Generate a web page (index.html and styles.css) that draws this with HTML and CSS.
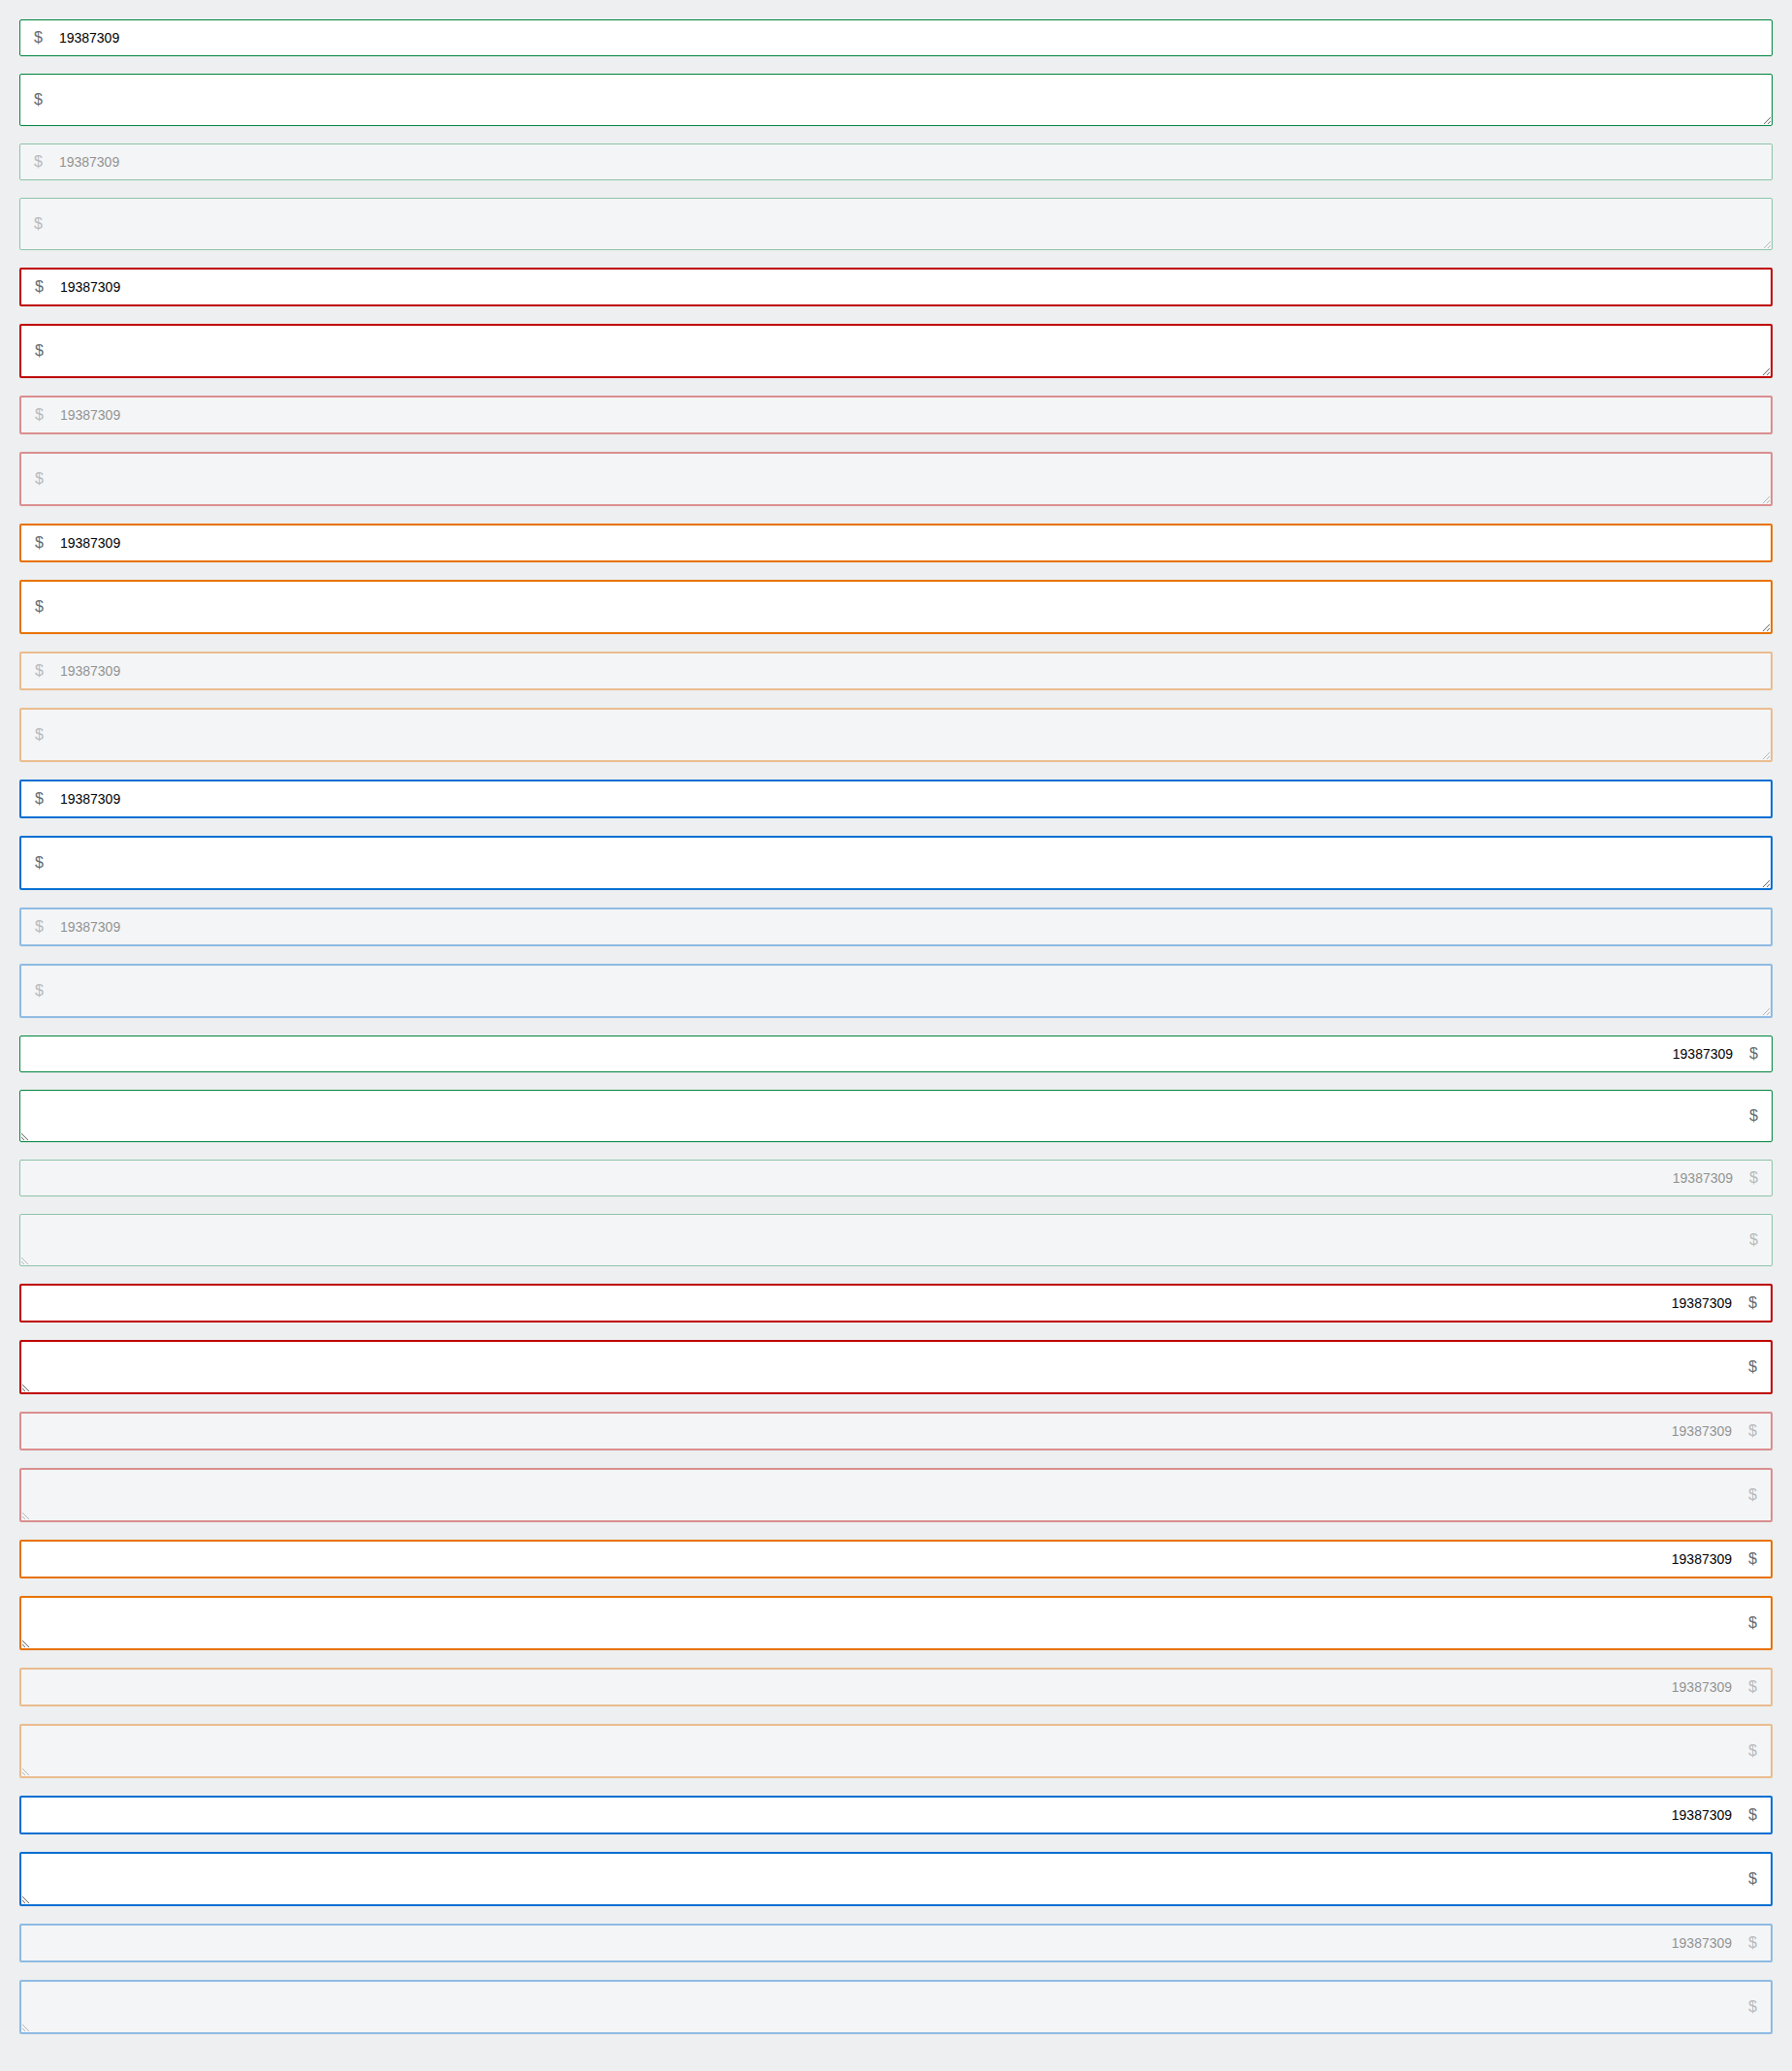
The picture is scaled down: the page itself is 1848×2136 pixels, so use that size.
FILE: index.html
```
<!DOCTYPE html>
<html lang="en">
<head>
<meta charset="utf-8">
<title>Adorned inputs</title>
<link rel="stylesheet" href="styles.css">
</head>
<body>
<main class="stack">
  <section class="stack" dir="ltr">
    <div class="field"><label class="adornment" for="l1">$</label><input class="control" id="l1" type="text" value="19387309"></div>
    <div class="field"><label class="adornment" for="l2">$</label><textarea class="control multiline" id="l2"></textarea></div>
    <div class="field disabled"><label class="adornment" for="l3">$</label><input class="control" id="l3" type="text" value="19387309" disabled></div>
    <div class="field disabled"><label class="adornment" for="l4">$</label><textarea class="control multiline" id="l4" disabled></textarea></div>
    <div class="field error"><label class="adornment" for="l5">$</label><input class="control" id="l5" type="text" value="19387309"></div>
    <div class="field error"><label class="adornment" for="l6">$</label><textarea class="control multiline" id="l6"></textarea></div>
    <div class="field error disabled"><label class="adornment" for="l7">$</label><input class="control" id="l7" type="text" value="19387309" disabled></div>
    <div class="field error disabled"><label class="adornment" for="l8">$</label><textarea class="control multiline" id="l8" disabled></textarea></div>
    <div class="field warning"><label class="adornment" for="l9">$</label><input class="control" id="l9" type="text" value="19387309"></div>
    <div class="field warning"><label class="adornment" for="l10">$</label><textarea class="control multiline" id="l10"></textarea></div>
    <div class="field warning disabled"><label class="adornment" for="l11">$</label><input class="control" id="l11" type="text" value="19387309" disabled></div>
    <div class="field warning disabled"><label class="adornment" for="l12">$</label><textarea class="control multiline" id="l12" disabled></textarea></div>
    <div class="field info"><label class="adornment" for="l13">$</label><input class="control" id="l13" type="text" value="19387309"></div>
    <div class="field info"><label class="adornment" for="l14">$</label><textarea class="control multiline" id="l14"></textarea></div>
    <div class="field info disabled"><label class="adornment" for="l15">$</label><input class="control" id="l15" type="text" value="19387309" disabled></div>
    <div class="field info disabled"><label class="adornment" for="l16">$</label><textarea class="control multiline" id="l16" disabled></textarea></div>
  </section>
  <section class="stack" dir="rtl">
    <div class="field"><label class="adornment" for="r1">$</label><input class="control" id="r1" type="text" value="19387309"></div>
    <div class="field"><label class="adornment" for="r2">$</label><textarea class="control multiline" id="r2"></textarea></div>
    <div class="field disabled"><label class="adornment" for="r3">$</label><input class="control" id="r3" type="text" value="19387309" disabled></div>
    <div class="field disabled"><label class="adornment" for="r4">$</label><textarea class="control multiline" id="r4" disabled></textarea></div>
    <div class="field error"><label class="adornment" for="r5">$</label><input class="control" id="r5" type="text" value="19387309"></div>
    <div class="field error"><label class="adornment" for="r6">$</label><textarea class="control multiline" id="r6"></textarea></div>
    <div class="field error disabled"><label class="adornment" for="r7">$</label><input class="control" id="r7" type="text" value="19387309" disabled></div>
    <div class="field error disabled"><label class="adornment" for="r8">$</label><textarea class="control multiline" id="r8" disabled></textarea></div>
    <div class="field warning"><label class="adornment" for="r9">$</label><input class="control" id="r9" type="text" value="19387309"></div>
    <div class="field warning"><label class="adornment" for="r10">$</label><textarea class="control multiline" id="r10"></textarea></div>
    <div class="field warning disabled"><label class="adornment" for="r11">$</label><input class="control" id="r11" type="text" value="19387309" disabled></div>
    <div class="field warning disabled"><label class="adornment" for="r12">$</label><textarea class="control multiline" id="r12" disabled></textarea></div>
    <div class="field info"><label class="adornment" for="r13">$</label><input class="control" id="r13" type="text" value="19387309"></div>
    <div class="field info"><label class="adornment" for="r14">$</label><textarea class="control multiline" id="r14"></textarea></div>
    <div class="field info disabled"><label class="adornment" for="r15">$</label><input class="control" id="r15" type="text" value="19387309" disabled></div>
    <div class="field info disabled"><label class="adornment" for="r16">$</label><textarea class="control multiline" id="r16" disabled></textarea></div>
  </section>
</main>
</body>
</html>
```
FILE: styles.css
```
* {
  box-sizing: border-box;
}

body {
  margin: 0;
  padding: 20px;
  background: #edeff0;
  font-family: "Liberation Sans", Arial, sans-serif;
}

.stack {
  display: flex;
  flex-direction: column;
  gap: 18px;
}

.field {
  display: flex;
  align-items: center;
  border: 1px solid #00853e;
  border-radius: 2px;
  background: #fff;
}

.error {
  border: 2px solid #bf0000;
}

.warning {
  border: 2px solid #e87200;
}

.info {
  border: 2px solid #056fd2;
}

.disabled {
  opacity: 0.4;
}

.adornment {
  padding-inline-start: 14px;
  font-size: 16px;
  line-height: 20px;
  color: #646a70;
}

.control {
  flex: 1;
  min-width: 0;
  height: 36px;
  margin: 0;
  padding: 0 17px;
  border: 0;
  outline: 0;
  background: transparent;
  color: #000;
  font-family: inherit;
  font-size: 14px;
}

.multiline {
  height: 52px;
  padding: 8px 17px;
  resize: both;
}
```
